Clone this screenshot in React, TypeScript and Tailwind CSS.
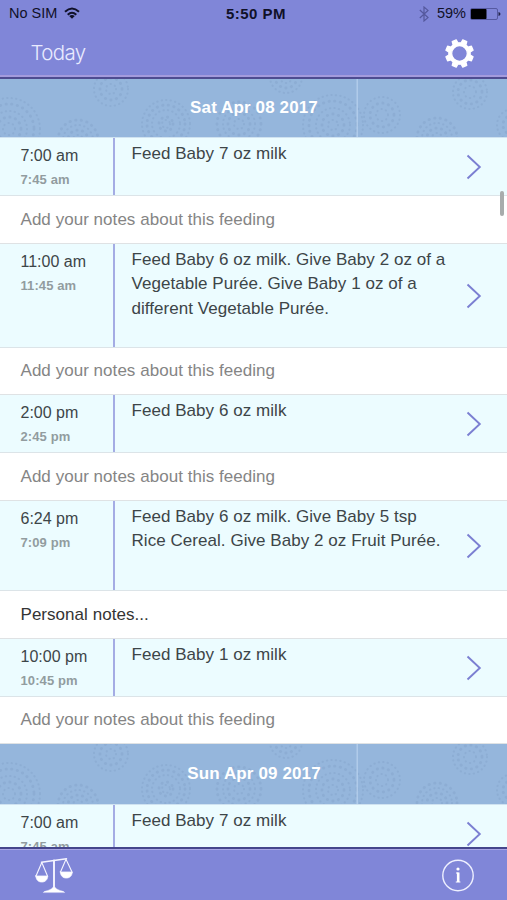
import React from 'react';

type Feeding = {
  start: string;
  end: string;
  lines: string[];
  note: string;
  personal?: boolean;
  rowHeight: string;
  noteHeight: string;
};

const PLACEHOLDER = 'Add your notes about this feeding';

const feedings: Feeding[] = [
  { start: '7:00 am', end: '7:45 am', lines: ['Feed Baby 7 oz milk'], note: PLACEHOLDER, rowHeight: 'h-[58px]', noteHeight: 'h-12' },
  {
    start: '11:00 am',
    end: '11:45 am',
    lines: ['Feed Baby 6 oz milk. Give Baby 2 oz of a', 'Vegetable Purée. Give Baby 1 oz of a', 'different Vegetable Purée.'],
    note: PLACEHOLDER,
    rowHeight: 'h-[104px]',
    noteHeight: 'h-[47px]',
  },
  { start: '2:00 pm', end: '2:45 pm', lines: ['Feed Baby 6 oz milk'], note: PLACEHOLDER, rowHeight: 'h-[58px]', noteHeight: 'h-12' },
  {
    start: '6:24 pm',
    end: '7:09 pm',
    lines: ['Feed Baby 6 oz milk. Give Baby 5 tsp', 'Rice Cereal. Give Baby 2 oz Fruit Purée.'],
    note: 'Personal notes...',
    personal: true,
    rowHeight: 'h-[90px]',
    noteHeight: 'h-12',
  },
  { start: '10:00 pm', end: '10:45 pm', lines: ['Feed Baby 1 oz milk'], note: PLACEHOLDER, rowHeight: 'h-[58px]', noteHeight: 'h-[47px]' },
];

function gearPath() {
  const points: string[] = [];
  for (let i = 0; i < 8; i++) {
    const base = i * 45 + 22.5;
    const corners: [number, number][] = [[-14, 10.8], [-9, 14], [9, 14], [14, 10.8]];
    for (const [offset, radius] of corners) {
      const a = ((base + offset) * Math.PI) / 180;
      points.push(`${(15.5 + radius * Math.cos(a)).toFixed(2)} ${(15.5 + radius * Math.sin(a)).toFixed(2)}`);
    }
  }
  return `M${points.join('L')}ZM23.3 15.5a7.8 7.8 0 1 0-15.6 0a7.8 7.8 0 1 0 15.6 0Z`;
}

function Gear() {
  return (
    <svg className="h-[31px] w-[31px]" viewBox="0 0 31 31">
      <path d={gearPath()} fill="#fff" stroke="#fff" strokeWidth="1.2" strokeLinejoin="round" fillRule="evenodd" />
    </svg>
  );
}

function Scales() {
  return (
    <svg className="h-[38px] w-[40px]" viewBox="0 0 40 38" fill="none" stroke="#f5f5ff" strokeLinecap="round" strokeLinejoin="round">
      <path d="M7.5 6.2L32.5 2.8" strokeWidth="1.5" />
      <path d="M20 4.5V33" strokeWidth="1.9" />
      <path d="M7.8 6.5L2 20M7.8 6.5L13.5 20M32 3.2L26.5 16M32 3.2L38 16" strokeWidth="1.1" />
      <path d="M1.8 20H13.8C13.4 24.3 11 26 7.8 26S2.2 24.3 1.8 20ZM26.3 16H38.3C37.9 20.3 35.5 22 32.3 22S26.7 20.3 26.3 16Z" fill="#fff" strokeWidth=".8" />
      <path d="M9.5 36.2C10 34.8 16 35 18.8 31.5H21.2C24 35 30 34.8 30.5 36.2Z" fill="#fff" strokeWidth=".5" />
    </svg>
  );
}

function Chevron() {
  return (
    <svg className="h-[26px] w-[16px] shrink-0" viewBox="0 0 16 26" fill="none" stroke="#7b7fd2" strokeWidth="1.9">
      <path d="M1.5 1.5L13.8 13L1.5 24.5" />
    </svg>
  );
}

const rosettes: { x: number; y: number; rings: number[] }[] = [
  { x: 9, y: 50, rings: [6, 12, 18, 25, 31] },
  { x: 78, y: 61, rings: [5, 10, 15, 20] },
  { x: 111, y: 10, rings: [5, 11, 17] },
  { x: 166, y: 45, rings: [4, 7, 14, 19, 24] },
  { x: 239, y: 45, rings: [5, 11, 16, 22] },
  { x: 286, y: -2, rings: [6, 11, 16] },
  { x: 333, y: 46, rings: [5, 11, 17, 24, 30] },
  { x: 382, y: 36, rings: [6, 12, 18] },
  { x: 437, y: 59, rings: [5, 10, 15, 20] },
  { x: 470, y: 13, rings: [6, 12, 17] },
  { x: 513, y: 46, rings: [5, 10, 16] },
];

function DayBanner({ label, height, labelClass }: { label: string; height: string; labelClass: string }) {
  return (
    <div className={`relative flex shrink-0 items-center overflow-hidden border-b border-[#cfe2f0] bg-[#95b6dc] ${height}`}>
      <svg className="absolute inset-0 h-full w-full" fill="none" stroke="#7f9fc6" strokeLinecap="round">
        <g opacity=".36">
          {rosettes.map((r) =>
            r.rings.map((radius, i) => (
              <circle key={`${r.x}-${radius}`} cx={r.x} cy={r.y} r={radius} strokeWidth={i % 2 ? 2.8 : 2} strokeDasharray={i % 2 ? '.3 5.4' : '.3 4.2'} />
            )),
          )}
        </g>
        <path d="M357.2 0V61" stroke="#b5cfec" strokeWidth="1.3" />
      </svg>
      <div className={`relative w-full pl-px text-center text-[17px] leading-5 font-bold tracking-[0.12px] text-white ${labelClass}`}>{label}</div>
    </div>
  );
}

function FeedingRow({ start, end, lines, height }: { start: string; end: string; lines: string[]; height: string }) {
  return (
    <div className={`flex shrink-0 border-b border-[#dce4e8] bg-[#ecfcff] text-[#3d4548] ${height}`}>
      <div className="w-[113px] shrink-0 pt-[7px] pl-[20.5px]">
        <div className="text-[16px] leading-[22px] whitespace-nowrap">{start}</div>
        <div className="mt-[3px] text-[13px] leading-5 font-bold tracking-[0.1px] whitespace-nowrap text-[#929c9f]">{end}</div>
      </div>
      <div className="w-[2px] shrink-0 bg-[#a4ace4]" />
      <div className="grow pt-[4px] pl-[16.5px] text-[17px] leading-[24.3px] tracking-[0.05px] whitespace-nowrap">
        {lines.map((line) => (
          <div key={line}>{line}</div>
        ))}
      </div>
      <div className="flex w-[41px] shrink-0 items-center">
        <Chevron />
      </div>
    </div>
  );
}

function StatusBar() {
  return (
    <div className="grid h-7 grid-cols-3 items-center text-[#101128]">
      <div className="flex items-center gap-[7px] pl-[9px] text-[14.5px]">
        <span>No SIM</span>
        <svg className="mb-[2px] h-[13px] w-[16px]" viewBox="0 0 16 13" fill="none" stroke="#101128" strokeWidth="2">
          <path d="M1 4.8Q8 -1.7 15 4.8M3.7 7.7Q8 3.8 12.3 7.7" />
          <path d="M8 11.8L5.2 9Q8 6.8 10.8 9Z" fill="#101128" stroke="none" />
        </svg>
      </div>
      <div className="pl-[5px] text-center text-[15px] font-bold tracking-[0.45px] whitespace-nowrap">5:50 PM</div>
      <div className="flex items-center justify-end pr-[6px] text-[14.5px]">
        <svg className="mr-[8px] h-4 w-[10px]" viewBox="0 0 10 16" fill="none" stroke="#54589d" strokeWidth="1.2">
          <path d="M.8 4L9 11.6L5 15V1L9 4.4L.8 12" />
        </svg>
        <span>59%</span>
        <svg className="ml-[4px] h-3 w-[31px]" viewBox="0 0 31 12">
          <rect x=".5" y=".5" width="27" height="11" rx="1.5" fill="none" stroke="#5559a0" />
          <rect x="1" y="1" width="15.5" height="10" rx=".7" fill="#000" />
          <path d="M28.5 4Q30.5 4.5 30.5 6T28.5 8Z" fill="#22244a" />
        </svg>
      </div>
    </div>
  );
}

export default function App() {
  return (
    <div className="relative flex h-[900px] w-[507px] flex-col overflow-hidden bg-white font-['Liberation_Sans',Arial,sans-serif]">
      <header className="h-[79px] shrink-0 border-b-2 border-[#4e4c91] bg-[#8086d8]">
        <StatusBar />
        <div className="flex h-[47px] items-center justify-between pr-8 pl-[30.5px]">
          <div className="pt-[3px] font-['Inter',sans-serif] text-[20.5px] font-light tracking-[-0.65px] text-[#e9ebff]">Today</div>
          <div className="pt-1">
            <Gear />
          </div>
        </div>
        <div className="h-[2px] bg-[#a49bdd]" />
      </header>

      <main className="flex min-h-0 grow flex-col overflow-hidden">
        <DayBanner label="Sat Apr 08 2017" height="h-[59px]" labelClass="pb-[1px]" />
        {feedings.map((f) => (
          <React.Fragment key={f.start}>
            <FeedingRow start={f.start} end={f.end} lines={f.lines} height={f.rowHeight} />
            <div className={`flex shrink-0 items-center border-b border-[#dfe2e4] bg-white pb-[0.5px] pl-[20.5px] text-[17px] tracking-[0.04px] ${f.noteHeight} ${f.personal ? 'text-[#343434]' : 'text-[#858585]'}`}>
              {f.note}
            </div>
          </React.Fragment>
        ))}
        <DayBanner label="Sun Apr 09 2017" height="h-[61px]" labelClass="pb-0" />
        <FeedingRow start="7:00 am" end="7:45 am" lines={['Feed Baby 7 oz milk']} height="h-[58px]" />
      </main>

      <footer className="flex h-[53px] shrink-0 items-center justify-between border-t-2 border-[#45468c] bg-[#8086d8] pr-[32px] pl-[34px] shadow-[inset_0_1px_#a9a6e6]">
        <Scales />
        <svg className="h-[34px] w-[34px]" viewBox="0 0 34 34" fill="none" stroke="#fff">
          <circle cx="17" cy="17.5" r="15.2" stroke="#eef0ff" strokeWidth="1.4" />
          <circle cx="17" cy="11" r="1.6" fill="#fff" stroke="none" />
          <path d="M17.2 14.5V24" strokeWidth="2.6" />
          <path d="M15 15H17.5M14.8 24H19.4" strokeWidth="1.2" />
        </svg>
      </footer>

      <div className="absolute top-[191px] right-[3px] h-[25px] w-1 rounded-full bg-[#a8acac]" />
    </div>
  );
}
